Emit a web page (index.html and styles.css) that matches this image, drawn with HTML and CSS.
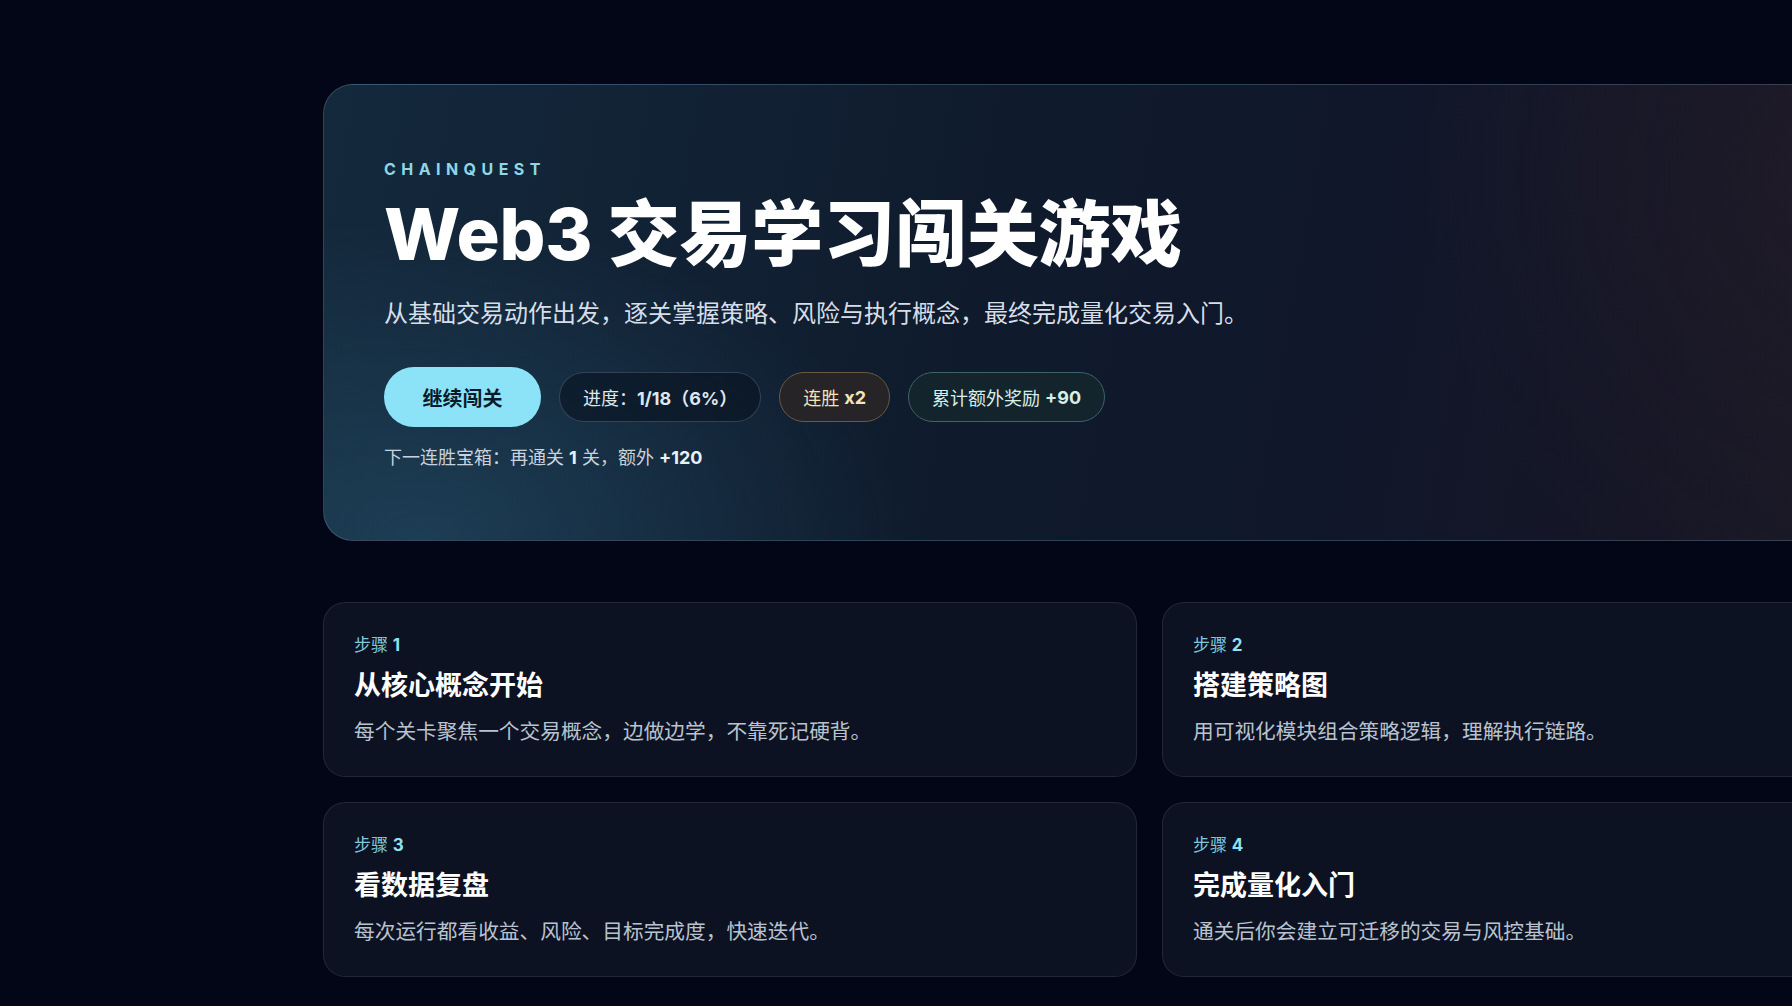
FILE: index.html
```html
<!DOCTYPE html>
<html lang="zh-CN">
<head>
<meta charset="utf-8">
<title>ChainQuest</title>
<link rel="stylesheet" href="styles.css">
</head>
<body>
<main class="page">
  <section class="hero">
    <div class="eyebrow">CHAINQUEST</div>
    <h1 class="hero-title">Web3 交易学习闯关游戏</h1>
    <p class="hero-sub">从基础交易动作出发，逐关掌握策略、风险与执行概念，最终完成量化交易入门。</p>
    <div class="hero-actions">
      <button class="btn-primary">继续闯关</button>
      <span class="pill pill-progress">进度：<b>1/18（6%）</b></span>
      <span class="pill pill-streak">连胜 <b>x2</b></span>
      <span class="pill pill-bonus">累计额外奖励 <b>+90</b></span>
    </div>
    <p class="hero-note">下一连胜宝箱：再通关 <b>1</b> 关，额外 <b>+120</b></p>
  </section>

  <section class="steps">
    <article class="step-card">
      <div class="step-label">步骤 <b>1</b></div>
      <h2 class="step-title">从核心概念开始</h2>
      <p class="step-desc">每个关卡聚焦一个交易概念，边做边学，不靠死记硬背。</p>
    </article>
    <article class="step-card">
      <div class="step-label">步骤 <b>2</b></div>
      <h2 class="step-title">搭建策略图</h2>
      <p class="step-desc">用可视化模块组合策略逻辑，理解执行链路。</p>
    </article>
    <article class="step-card">
      <div class="step-label">步骤 <b>3</b></div>
      <h2 class="step-title">看数据复盘</h2>
      <p class="step-desc">每次运行都看收益、风险、目标完成度，快速迭代。</p>
    </article>
    <article class="step-card">
      <div class="step-label">步骤 <b>4</b></div>
      <h2 class="step-title">完成量化入门</h2>
      <p class="step-desc">通关后你会建立可迁移的交易与风控基础。</p>
    </article>
  </section>
</main>
</body>
</html>
```

FILE: styles.css
```css
* { box-sizing: border-box; }

html, body {
  margin: 0;
  padding: 0;
  background: #030616;
  overflow: hidden;
}

body {
  font-family: Inter, "Noto Sans CJK SC", "Noto Sans", sans-serif;
  color: #e8eef5;
  width: 1792px;
  height: 1006px;
}

.page {
  width: 1976px;
  padding: 84px 0 0 323px;
}

.hero {
  width: 1653px;
  height: 457px;
  border-radius: 30px;
  border: 1px solid rgba(130, 165, 195, 0.28);
  padding: 73px 60px 0 60px;
  background:
    radial-gradient(ellipse 480px 320px at 6% 100%, rgba(46, 104, 134, 0.36), rgba(46, 104, 134, 0) 100%),
    radial-gradient(ellipse 420px 460px at 92% 20%, rgba(50, 36, 44, 0.3), rgba(50, 36, 44, 0) 100%),
    linear-gradient(100deg, #14293c 0%, #0f1b2d 40%, #10172a 60%, #151626 80%, #1c1a24 100%);
  display: flex;
  flex-direction: column;
  align-items: flex-start;
}

.eyebrow {
  font-size: 16px;
  font-weight: 700;
  letter-spacing: 0.34em;
  color: #8fd6e6;
  line-height: 22px;
}

.hero-title {
  margin: 12px 0 0 0;
  font-size: 72px;
  font-weight: 800;
  line-height: 84px;
  letter-spacing: -0.003em;
  color: #ffffff;
}

.hero-sub {
  margin: 21px 0 0 0;
  font-size: 24px;
  line-height: 34px;
  color: #d6dee8;
}

.hero-actions {
  margin-top: 36px;
  display: flex;
  align-items: center;
  gap: 18px;
}

.btn-primary {
  height: 60px;
  width: 157px;
  border: none;
  border-radius: 30px;
  background: #8ce3f7;
  color: #0a1a2a;
  font-family: Inter, "Noto Sans CJK SC", sans-serif;
  font-size: 20px;
  font-weight: 700;
  padding: 0;
}

.pill {
  height: 50px;
  border-radius: 25px;
  padding: 0 23px;
  display: inline-flex;
  align-items: center;
  font-size: 18px;
  white-space: pre;
}

.pill b { font-weight: 700; }

.pill-progress {
  background: rgba(8, 16, 30, 0.55);
  border: 1px solid rgba(150, 170, 195, 0.28);
  color: #dfe6ee;
}

.pill-streak {
  background: #272428;
  border: 1px solid #6a5a3f;
  color: #f4e2b8;
}

.pill-bonus {
  background: #13242d;
  border: 1px solid #3f6369;
  color: #d8efe9;
}

.hero-note {
  margin: 18px 0 0 0;
  font-size: 18px;
  line-height: 26px;
  color: #c9d3dd;
}

.hero-note b { color: #e9f0f6; font-weight: 700; }

.steps {
  margin-top: 61px;
  width: 1653px;
  display: grid;
  grid-template-columns: 814px 814px;
  column-gap: 25px;
  row-gap: 25px;
}

.step-card {
  height: 175px;
  border-radius: 22px;
  border: 1px solid rgba(255, 255, 255, 0.09);
  background: #0d1222;
  padding: 30px 30px 0 30px;
}

.step-label {
  font-size: 17px;
  line-height: 24px;
  color: #7fc9dc;
}

.step-label b { color: #8fe2f3; font-weight: 700; }

.step-title {
  margin: 11px 0 0 0;
  font-size: 27px;
  font-weight: 700;
  line-height: 36px;
  color: #ffffff;
}

.step-desc {
  margin: 13px 0 0 0;
  font-size: 20.7px;
  line-height: 30px;
  color: #b9c3cf;
}
```
